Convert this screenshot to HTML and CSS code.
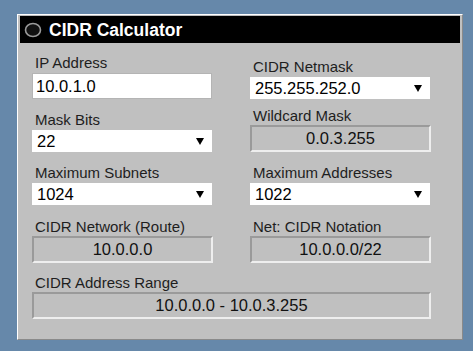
FILE: index.html
```html
<!DOCTYPE html>
<html>
<head>
<meta charset="utf-8">
<title>CIDR Calculator</title>
<link rel="stylesheet" href="styles.css">
</head>
<body>
<div class="panel">
  <div class="titlebar">
    <svg class="title-icon" width="18" height="16" viewBox="0 0 18 16"><ellipse cx="9" cy="8" rx="7.5" ry="6.5" fill="#111" stroke="#9a9a9a" stroke-width="1.6"/></svg>
    <span class="title-text">CIDR Calculator</span>
  </div>
  <div class="form">
    <div class="field">
      <label class="label">IP Address</label>
      <input class="text-input" type="text" value="10.0.1.0">
    </div>
    <div class="field">
      <label class="label">CIDR Netmask</label>
      <div class="select"><span>255.255.252.0</span></div>
    </div>
    <div class="field">
      <label class="label">Mask Bits</label>
      <div class="select"><span>22</span></div>
    </div>
    <div class="field">
      <label class="label">Wildcard Mask</label>
      <div class="readout">0.0.3.255</div>
    </div>
    <div class="field">
      <label class="label">Maximum Subnets</label>
      <div class="select"><span>1024</span></div>
    </div>
    <div class="field">
      <label class="label">Maximum Addresses</label>
      <div class="select"><span>1022</span></div>
    </div>
    <div class="field">
      <label class="label">CIDR Network (Route)</label>
      <div class="readout">10.0.0.0</div>
    </div>
    <div class="field">
      <label class="label">Net: CIDR Notation</label>
      <div class="readout">10.0.0.0/22</div>
    </div>
    <div class="field field-wide">
      <label class="label">CIDR Address Range</label>
      <div class="readout">10.0.0.0 - 10.0.3.255</div>
    </div>
  </div>
</div>
</body>
</html>
```
FILE: styles.css
```css
html, body {
  margin: 0;
  padding: 0;
}
body {
  background: #6688aa;
  font-family: "Liberation Sans", Arial, sans-serif;
  width: 473px;
  height: 351px;
  overflow: hidden;
}
.panel {
  box-sizing: border-box;
  margin: 14px 0 0 17px;
  width: 446px;
  height: 326px;
  background: #c0c0c0;
  border: 1px solid;
  border-color: #ffffff #8a8a8a #8a8a8a #ffffff;
  padding: 1px 2px;
}
.titlebar {
  height: 27px;
  background: #000;
  display: flex;
  align-items: center;
  padding-left: 4px;
  gap: 7px;
}
.title-icon {
  display: block;
}
.title-text {
  color: #fff;
  font-weight: bold;
  font-size: 17.5px;
  line-height: 20px;
}
.form {
  display: grid;
  grid-template-columns: 181px 181px;
  column-gap: 37px;
  grid-template-rows: 45px 53px 53px 58px 56px;
  align-items: end;
  padding: 11px 0 0 12px;
}
.field {
  display: flex;
  flex-direction: column;
}
.field-wide {
  grid-column: 1 / -1;
}
.label {
  font-size: 15px;
  line-height: 17px;
  color: #1e1e1e;
  margin-bottom: 2px;
  padding-left: 3px;
}
.text-input {
  box-sizing: border-box;
  height: 26px;
  width: 180px;
  margin: 0;
  border: 1px solid #b4b4b4;
  background: #fff;
  padding: 0 3px;
  font-family: "Liberation Sans", Arial, sans-serif;
  font-size: 16.5px;
  color: #000;
  outline: none;
}
.select {
  position: relative;
  box-sizing: border-box;
  height: 22px;
  width: 180px;
  background: #fff;
  padding: 0 5px;
  font-size: 16.5px;
  line-height: 22px;
  color: #000;
}
.select::after {
  content: "";
  position: absolute;
  right: 8px;
  top: 8px;
  border-left: 4px solid transparent;
  border-right: 4px solid transparent;
  border-top: 7px solid #000;
}
.readout {
  box-sizing: border-box;
  height: 27px;
  margin-top: -1px;
  border: 2px solid;
  border-color: #9a9a9a #eeeeee #eeeeee #9a9a9a;
  background: #c0c0c0;
  text-align: center;
  font-size: 16.5px;
  line-height: 23px;
  color: #111;
}
```
